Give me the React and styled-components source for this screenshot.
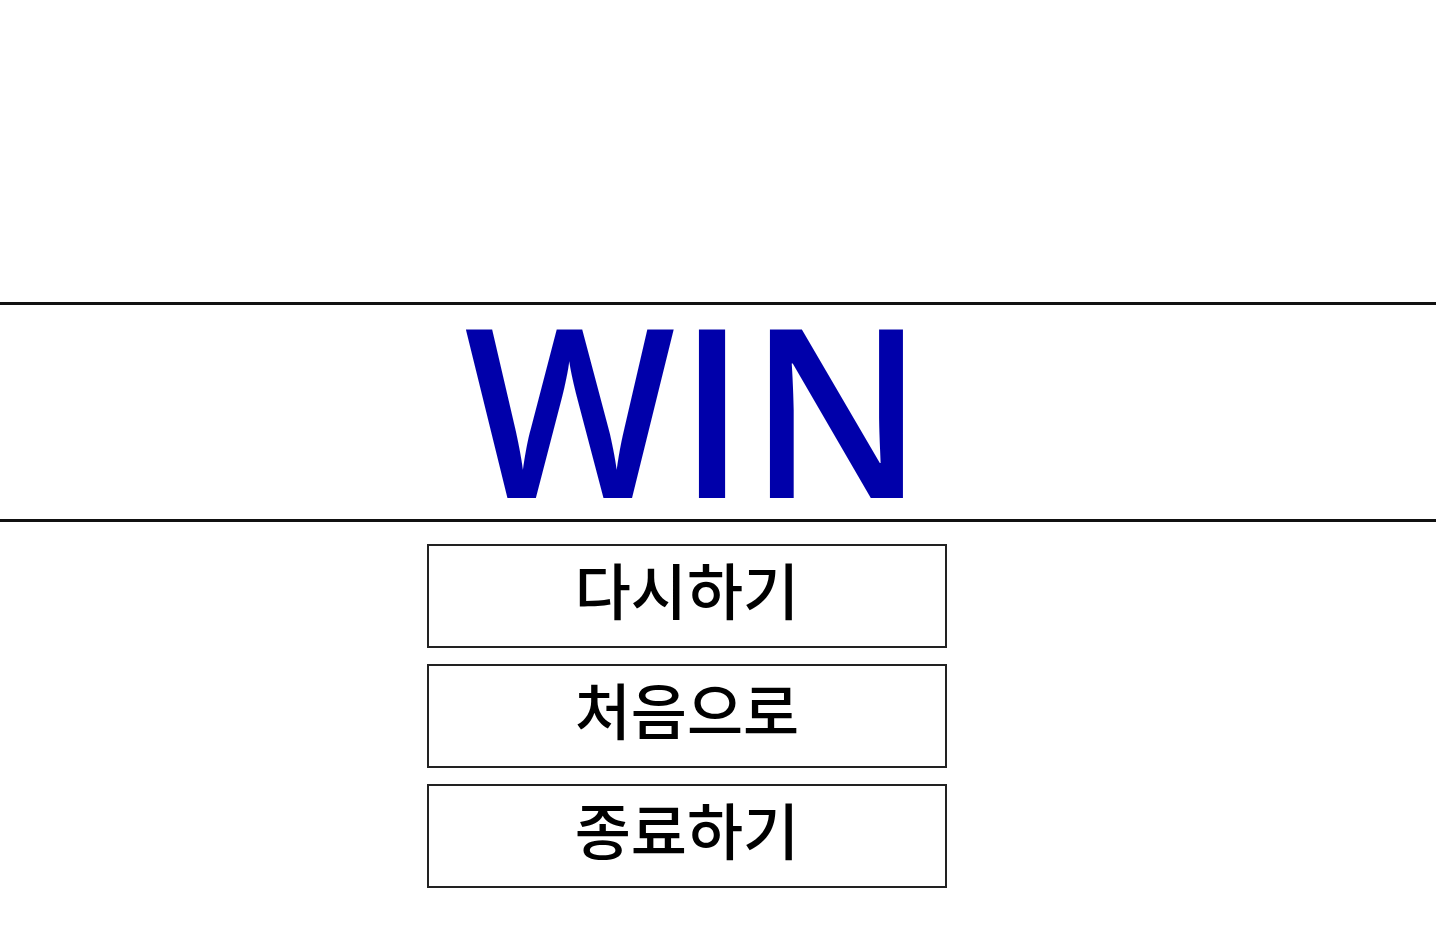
import React from 'react';
import styled, { createGlobalStyle } from 'styled-components';

const GlobalStyle = createGlobalStyle`
  html, body {
    margin: 0;
    padding: 0;
    background: #ffffff;
    font-family: "Noto Sans", "Noto Sans CJK KR", sans-serif;
  }
`;

const Page = styled.div`
  width: 1440px;
  min-height: 933px;
  display: flex;
  flex-direction: column;
  padding-top: 302px;
  box-sizing: border-box;
`;

const Banner = styled.div`
  margin-right: 4px;
  height: 204px;
  padding: 0 46px 10px 0;
  border-top: 3px solid #111;
  border-bottom: 3px solid #111;
  display: flex;
  align-items: center;
  justify-content: center;
`;

const Title = styled.h1`
  margin: 0;
  font-family: "Open Sans", "Noto Sans", sans-serif;
  font-weight: 640;
  font-size: 235px;
  line-height: 1;
  letter-spacing: 3px;
  color: #0000aa;
  transform: scaleX(0.95);
`;

const Menu = styled.div`
  display: flex;
  flex-direction: column;
  align-items: center;
  gap: 16px;
  padding-top: 22px;
  padding-right: 66px;
`;

const MenuButton = styled.button`
  width: 520px;
  height: 104px;
  display: flex;
  align-items: center;
  justify-content: center;
  background: #ffffff;
  border: 2px solid #222;
  border-radius: 0;
  padding: 0 0 16px;
  font-family: "Noto Sans CJK KR", "Noto Sans", sans-serif;
  font-size: 61px;
  font-weight: 500;
  line-height: 1;
  color: #000;
  cursor: pointer;
`;

const items = ['다시하기', '처음으로', '종료하기'];

const App = () => (
  <>
    <GlobalStyle />
    <Page>
      <Banner>
        <Title>WIN</Title>
      </Banner>
      <Menu>
        {items.map((label) => (
          <MenuButton key={label}>{label}</MenuButton>
        ))}
      </Menu>
    </Page>
  </>
);

export default App;
